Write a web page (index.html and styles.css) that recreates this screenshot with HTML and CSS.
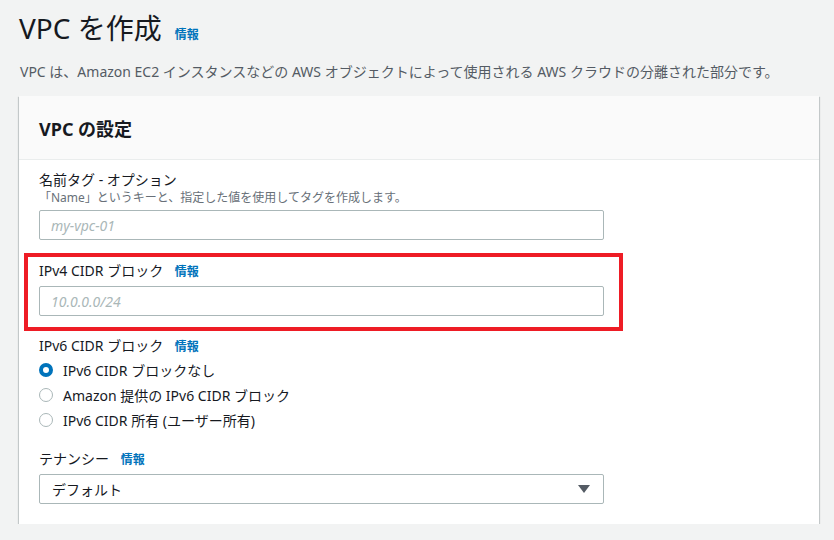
FILE: index.html
```html
<!DOCTYPE html>
<html lang="ja">
<head>
<meta charset="utf-8">
<title>VPC を作成</title>
<link rel="stylesheet" href="styles.css">
</head>
<body>

<div class="page">
	<div class="title-row">
		<h1>VPC を作成</h1>
		<a class="info" href="#">情報</a>
	</div>
	<p class="lead">VPC は、Amazon EC2 インスタンスなどの AWS オブジェクトによって使用される AWS クラウドの分離された部分です。</p>

	<div class="card">
		<div class="card-header">
			<h2>VPC の設定</h2>
		</div>
		<div class="card-body">

			<div class="field">
				<div class="label">名前タグ - オプション</div>
				<div class="hint">「Name」というキーと、指定した値を使用してタグを作成します。</div>
				<input class="text-input" type="text" placeholder="my-vpc-01">
			</div>

			<div class="field highlight">
				<div class="label">IPv4 CIDR ブロック <a class="info" href="#">情報</a></div>
				<input class="text-input" type="text" placeholder="10.0.0.0/24">
			</div>

			<div class="field after-highlight">
				<div class="label">IPv6 CIDR ブロック <a class="info" href="#">情報</a></div>
				<div class="radios">
					<div class="radio"><span class="dot checked"></span>IPv6 CIDR ブロックなし</div>
					<div class="radio"><span class="dot"></span>Amazon 提供の IPv6 CIDR ブロック</div>
					<div class="radio"><span class="dot"></span>IPv6 CIDR 所有 (ユーザー所有)</div>
				</div>
			</div>

			<div class="field tenancy">
				<div class="label">テナンシー <a class="info" href="#">情報</a></div>
				<div class="select">
					<span>デフォルト</span>
					<svg width="14" height="10" viewBox="0 0 14 10"><path d="M1 1h12L7 9z" fill="#545b64"/></svg>
				</div>
			</div>

		</div>
	</div>
</div>

</body>
</html>
```

FILE: styles.css
```css
body {
	margin: 0;
	background: #f2f3f3;
	color: #16191f;
	font-family: "Noto Sans", "Noto Sans CJK JP", sans-serif;
}

.page {
	padding: 10px 15px 0 19px;
	width: 800px;
}

.title-row {
	display: flex;
	align-items: baseline;
	gap: 13px;
}

h1 {
	margin: 0;
	font-size: 28px;
	font-weight: 400;
	line-height: 36px;
}

.info {
	color: #0073bb;
	font-size: 12px;
	font-weight: 700;
	text-decoration: none;
	margin-left: 8px;
}

.title-row .info {
	margin-left: 0;
}

.lead {
	margin: 16px 0 14px 1px;
	font-size: 14px;
	color: #545b64;
	line-height: 20px;
}

.card {
	background: #fff;
	box-shadow: 0 1px 1px 0 rgba(0, 28, 36, 0.3), 1px 1px 1px 0 rgba(0, 28, 36, 0.15), -1px 1px 1px 0 rgba(0, 28, 36, 0.15);
}

.card-header {
	background: #fafafa;
	border-bottom: 1px solid #eaeded;
	height: 63px;
	padding: 0 20px;
	display: flex;
	align-items: center;
}

h2 {
	margin: 0;
	font-size: 18px;
	font-weight: 700;
}

.card-body {
	padding: 10px 20px 20px;
}

.label {
	font-size: 14px;
	line-height: 20px;
	height: 20px;
	color: #16191f;
}

.hint {
	font-size: 12px;
	line-height: 16px;
	color: #687078;
}

.text-input {
	display: block;
	box-sizing: border-box;
	width: 565px;
	height: 30px;
	margin-top: 4px;
	padding: 0 11px;
	border: 1px solid #aab7b8;
	border-radius: 2px;
	font-family: inherit;
	font-size: 14px;
}

.text-input::placeholder {
	color: #aab7b8;
	font-style: italic;
}

.highlight {
	border: 4px solid #ee1c25;
	margin: 13px 0 0 -15px;
	width: 580px;
	padding: 4px 0 11px 11px;
}

.highlight .text-input {
	margin-top: 5px;
}

.after-highlight {
	margin-top: 5px;
}

.radios {
	margin-top: 1px;
}

.radio {
	display: flex;
	align-items: center;
	height: 25px;
	font-size: 14px;
	color: #16191f;
}

.dot {
	box-sizing: border-box;
	width: 14px;
	height: 14px;
	border-radius: 50%;
	border: 1px solid #aab7b8;
	margin-right: 10px;
}

.dot.checked {
	border: 4px solid #0073bb;
}

.tenancy {
	margin-top: 17px;
}

.select {
	box-sizing: border-box;
	width: 565px;
	height: 30px;
	margin-top: 5px;
	padding: 0 12px;
	border: 1px solid #aab7b8;
	border-radius: 2px;
	display: flex;
	align-items: center;
	justify-content: space-between;
	font-size: 14px;
}
```
